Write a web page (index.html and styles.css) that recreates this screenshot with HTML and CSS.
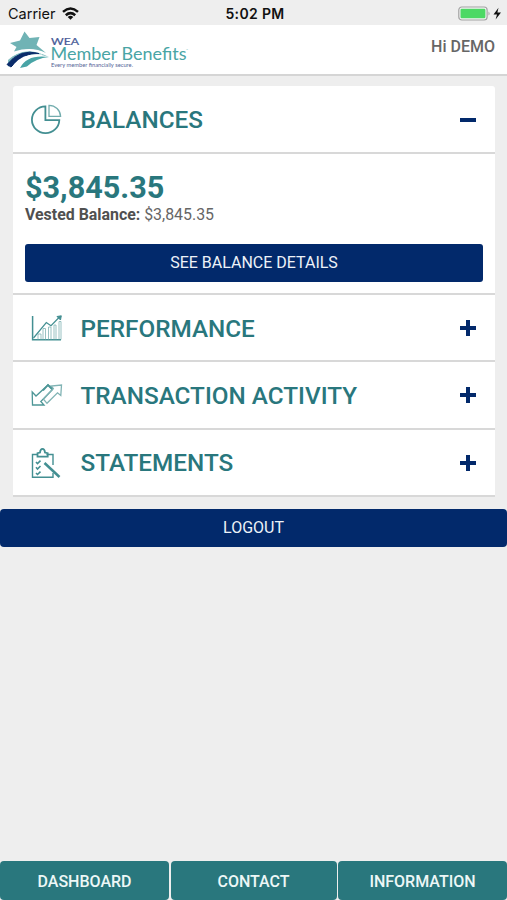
FILE: index.html
```html
<!DOCTYPE html>
<html lang="en">
<head>
<meta charset="utf-8">
<title>Member Benefits</title>
<link rel="stylesheet" href="styles.css">
</head>
<body>
<div class="app">
  <div class="status">
    <div class="carrier"><span>Carrier</span>
      <svg width="17" height="13" viewBox="0 0 17 13"><g fill="none" stroke="#111" stroke-width="2.5"><path d="M1 4.9Q8.5-1.8 16 4.9"/><path d="M3.8 8.2Q8.5 4 13.2 8.2"/></g><path d="M5.7 10Q8.5 7.5 11.3 10L8.5 12.8Z" fill="#111"/></svg>
    </div>
    <span class="time">5:02 PM</span>
    <svg class="battery" width="44" height="16" viewBox="0 0 44 16"><rect x=".8" y="1" width="28.3" height="13" rx="3" fill="#f4f4f4" stroke="#a2a2a2" stroke-width="1.2"/><rect x="2.5" y="2.7" width="24.9" height="9.6" rx="1.2" fill="#4cd964"/><path d="M30.5 5.4q2.2 2.1 0 4.2z" fill="#a2a2a2"/><path d="M40.5 1.8L35.5 8.4H39L37.6 13.4L43 6.6H39.4Z" fill="#111"/></svg>
  </div>
  <header class="header">
    <svg class="logo" width="184" height="40" viewBox="6 30 184 40">
      <path d="M24.5 31.5L29.5 38L39.5 37L36.5 45L46 53Q32 46 14 51.5L16.5 47L10 43L20 40.5Z" fill="#70b3b5"/>
      <path d="M8 60Q24 44 49 57Q24 49 8 67Z" fill="#82bdc0"/>
      <path d="M7 64.5Q20 48 39 53.5Q23 52.5 11 67Z" fill="#0b2c6b" stroke="#0b2c6b"/>
      <path d="M20 68Q27 54 49 57Q36 58 27 66.5Z" fill="#48a4a6"/>
      <path d="M12 55.5Q28 46 44 53.5" fill="none" stroke="#fff" stroke-width="1.5"/>
      <path d="M14 65Q24 53 42 55.2" fill="none" stroke="#fff" stroke-width="1.2"/>
      <g class="logo-text"><text x="51" y="44.5" font-size="9" textLength="28" lengthAdjust="spacingAndGlyphs" fill="#465996" stroke="#465996" stroke-width=".2">WEA</text>
      <text x="50.5" y="60" font-size="16.5" textLength="136" lengthAdjust="spacingAndGlyphs" fill="#49a5a5">Member Benefits</text>
      <text x="186" y="51" font-size="2.5" fill="#49a5a5">™</text>
      <text x="51" y="67" font-size="5" textLength="82" lengthAdjust="spacingAndGlyphs" fill="#536496">Every member financially secure.</text></g>
    </svg>
    <span class="greeting">Hi DEMO</span>
  </header>
  <main>
    <section class="card">
      <div class="row">
        <svg class="icon" viewBox="0 0 32 32"><g fill="none" stroke="#438f92"><path d="M14.4 2.3V16.2H28.3A13.7 13.4 0 1 1 14.4 2.3Z" stroke-width="1.8"/><path d="M18 1.3V12.4H29.6A11.5 11.5 0 0 0 18 1.3Z" stroke="#73adae" stroke-width="1.3"/></g></svg>
        <h2>BALANCES</h2><span class="toggle minus"></span>
      </div>
      <div class="detail">
        <div class="amount">$3,845.35</div>
        <div class="vested"><b>Vested Balance:</b> $3,845.35</div>
        <a class="button">SEE BALANCE DETAILS</a>
      </div>
      <div class="row">
        <svg class="icon" viewBox="0 0 32 32"><g fill="none" stroke="#438f92"><path d="M1.6 4V27.7H30" stroke-width="1.5"/><path d="M2.5 26L15.3 10.5L20 13.7L28.5 5" stroke-width="1.2"/><path d="M7 27.5V22H10V27.5M12 27.5V16.5H14.5V27.5M17.5 27.5V15H20V27.5M23 27.5V13H25V27.5M28 27.5V9.5H30V27.5" stroke="#80b3b4" stroke-width=".8"/></g><path d="M30.3 3.8L29.5 8L26 4.5Z" fill="#438f92" stroke="#438f92"/></svg>
        <h2>PERFORMANCE</h2><span class="toggle"></span>
      </div>
      <div class="row">
        <svg class="icon" viewBox="0 0 32 32"><g fill="none" stroke="#4d9697" stroke-width="1.3"><path d="M1.2 13L1.5 26H13L9.8 22.5L21.5 10.5L17 6L5 17Z"/><path d="M12.5 20.2L22.3 9.5L20 7L30.5 6L29.8 16.5L26.5 13.8L16 24.3Z" stroke="#80b3b4"/><path d="M12 11.5L17 6L21 10" stroke-width="1.8"/></g></svg>
        <h2>TRANSACTION ACTIVITY</h2><span class="toggle"></span>
      </div>
      <div class="row">
        <svg class="icon" viewBox="0 0 32 32"><g fill="none" stroke="#438f92"><path d="M7 7.5H1.5V30.3H22V26M15.5 7.5H22V18" stroke-width="1.4"/><path d="M6.5 9.7V6.2L9 5.5Q9.3 1.8 11.5 1.8T14 5.5L16.7 6.2V9.7Z" stroke-width="1.8"/><path d="M5 15L6.5 16.6L9.5 13.7M5 20.3L6.5 22L9.5 19M5 26L6.5 27.5L9.5 24.7" stroke-width="1.6"/><path d="M13.5 16L28.5 30" stroke-width="2.5"/></g></svg>
        <h2>STATEMENTS</h2><span class="toggle"></span>
      </div>
    </section>
    <a class="button logout">LOGOUT</a>
  </main>
  <nav class="tabs"><a>DASHBOARD</a><a>CONTACT</a><a>INFORMATION</a></nav>
</div>
</body>
</html>
```
FILE: styles.css
```css
* { box-sizing: border-box; }
body { margin: 0; background: #eee; font-family: Roboto, "Liberation Sans", sans-serif; color: #555; }
svg { display: block; }
.app { width: 507px; height: 900px; display: flex; flex-direction: column; overflow: hidden; }
.status { height: 25px; display: grid; grid-template-columns: 1fr auto 1fr; align-items: center; padding: 2px 5px 0 8px; font: 14.5px Inter, sans-serif; color: #111; }
.carrier { display: flex; align-items: center; gap: 6px; }
.time { font-weight: 600; font-size: 14px; letter-spacing: .35px; }
.battery { justify-self: end; }
.header { height: 51px; background: #fff; border-bottom: 2px solid #d5d5d5; display: flex; justify-content: space-between; padding: 5px 12px 0 6px; }
.logo-text { font-family: Lato, sans-serif; }
.greeting { font-size: 16px; line-height: 34px; font-weight: 500; color: #666; }
main { flex: 1; }
.card { margin: 10px 12px 12px 13px; height: 411px; background: #fff; border-radius: 3px 3px 0 0; }
.row { height: 67.3px; border-bottom: 2px solid #d8d8d8; display: flex; align-items: center; padding: 0 19px 0 17.5px; }
.card > .row:first-child { height: 68px; }
.icon { width: 32px; height: 32px; margin-right: 18px; flex: none; position: relative; top: .5px; }
h2 { margin: 0; flex: 1; font-size: 24.3px; line-height: 30px; font-weight: 500; color: #29777d; padding-top: 2px; white-space: nowrap; }
.toggle { width: 16px; height: 16px; margin-top: 1px; background: linear-gradient(#02296b, #02296b) center / 16px 4px no-repeat, linear-gradient(#02296b, #02296b) center / 4px 16px no-repeat; }
.minus { background: linear-gradient(#02296b, #02296b) center / 16px 4px no-repeat; }
.detail { height: 141px; border-bottom: 2px solid #d8d8d8; padding: 15px 12px 0; }
.amount { font-size: 30.6px; font-weight: 700; line-height: 38px; color: #29777d; }
.vested { font-size: 15.9px; line-height: 16px; color: #666; white-space: nowrap; }
.vested b { color: #505050; }
.button { display: flex; justify-content: center; align-items: center; height: 37.5px; border-radius: 3px; background: #02296b; color: #edf2f8; font-size: 16px; }
.detail .button { margin-top: 21px; }
.logout { border-radius: 4px; }
.tabs { height: 39px; display: grid; grid-template-columns: 169px 166px 169px; gap: 1.5px; }
.tabs a { display: flex; justify-content: center; align-items: center; padding-top: 2px; background: #29777d; border-radius: 4px; font-size: 16px; font-weight: 500; color: #edf7f7; }
```
